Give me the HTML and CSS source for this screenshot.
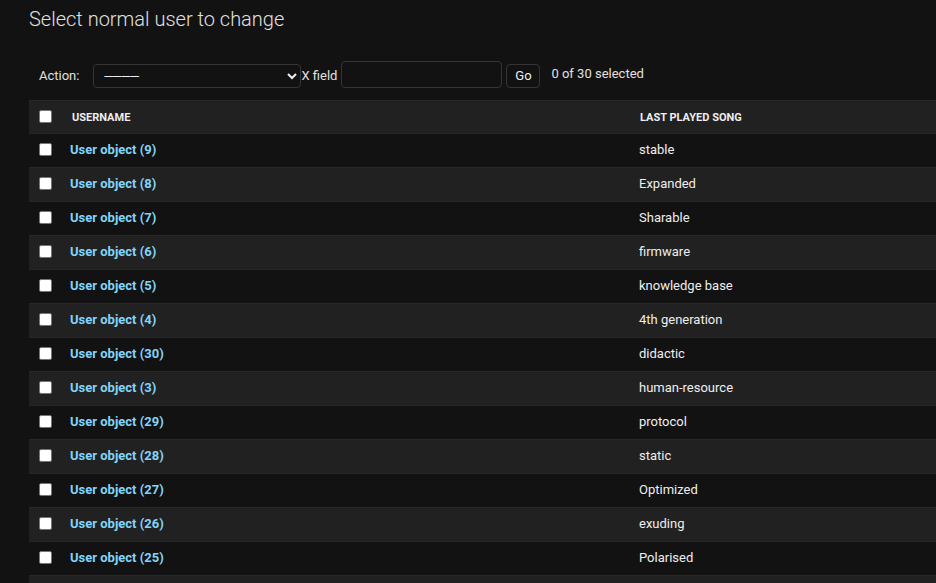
FILE: index.html
```html
<!DOCTYPE html>
<html lang="en">
<head>
<meta charset="utf-8">
<title>Select normal user to change</title>
<link rel="stylesheet" href="styles.css">
</head>
<body>
<div class="page">
  <h1 class="title">Select normal user to change</h1>
  <div class="actions">
    <label class="label-action">Action:</label>
    <select class="action-select">
      <option>————</option>
    </select>
    <label class="label-x">X field</label>
    <input class="x-input" type="text">
    <button class="go-btn" type="button">Go</button>
    <span class="counter">0 of 30 selected</span>
  </div>
  <table class="result-list">
    <colgroup>
      <col class="col-check">
      <col class="col-user">
      <col class="col-song">
    </colgroup>
    <thead>
      <tr>
        <th class="cb-cell"><input type="checkbox" class="cb"></th>
        <th><span class="th-text">Username</span></th>
        <th><span class="th-text">Last played song</span></th>
      </tr>
    </thead>
    <tbody>
      <tr><td class="cb-cell"><input type="checkbox" class="cb"></td><th class="user"><a href="#">User object (9)</a></th><td>stable</td></tr>
      <tr><td class="cb-cell"><input type="checkbox" class="cb"></td><th class="user"><a href="#">User object (8)</a></th><td>Expanded</td></tr>
      <tr><td class="cb-cell"><input type="checkbox" class="cb"></td><th class="user"><a href="#">User object (7)</a></th><td>Sharable</td></tr>
      <tr><td class="cb-cell"><input type="checkbox" class="cb"></td><th class="user"><a href="#">User object (6)</a></th><td>firmware</td></tr>
      <tr><td class="cb-cell"><input type="checkbox" class="cb"></td><th class="user"><a href="#">User object (5)</a></th><td>knowledge base</td></tr>
      <tr><td class="cb-cell"><input type="checkbox" class="cb"></td><th class="user"><a href="#">User object (4)</a></th><td>4th generation</td></tr>
      <tr><td class="cb-cell"><input type="checkbox" class="cb"></td><th class="user"><a href="#">User object (30)</a></th><td>didactic</td></tr>
      <tr><td class="cb-cell"><input type="checkbox" class="cb"></td><th class="user"><a href="#">User object (3)</a></th><td>human-resource</td></tr>
      <tr><td class="cb-cell"><input type="checkbox" class="cb"></td><th class="user"><a href="#">User object (29)</a></th><td>protocol</td></tr>
      <tr><td class="cb-cell"><input type="checkbox" class="cb"></td><th class="user"><a href="#">User object (28)</a></th><td>static</td></tr>
      <tr><td class="cb-cell"><input type="checkbox" class="cb"></td><th class="user"><a href="#">User object (27)</a></th><td>Optimized</td></tr>
      <tr><td class="cb-cell"><input type="checkbox" class="cb"></td><th class="user"><a href="#">User object (26)</a></th><td>exuding</td></tr>
      <tr><td class="cb-cell"><input type="checkbox" class="cb"></td><th class="user"><a href="#">User object (25)</a></th><td>Polarised</td></tr>
      <tr class="tail-row"><td class="cb-cell"></td><th class="user"></th><td></td></tr>
    </tbody>
  </table>
</div>
</body>
</html>
```

FILE: styles.css
```css
html, body {
  margin: 0;
  padding: 0;
  background: #121212;
  overflow: hidden;
}

body {
  font-family: Roboto, "Liberation Sans", sans-serif;
  color: #eeeeee;
  font-size: 13px;
}

.page {
  padding: 6px 0 0 29px;
  width: 1300px;
}

.title {
  margin: 0;
  font-size: 20px;
  font-weight: 300;
  line-height: 26px;
  color: #e0e0e0;
}

.actions {
  display: flex;
  align-items: flex-end;
  padding: 0 10px;
  margin-top: 29px;
  height: 27px;
  margin-bottom: 12px;
  color: #e0e0e0;
}

.label-action,
.label-x {
  line-height: 24px;
  font-size: 13px;
}

.label-action {
  margin-right: 14px;
}

.action-select {
  color-scheme: dark;
  width: 208px;
  height: 24px;
  margin: 0;
  background: #121212;
  color: #eeeeee;
  border: 1px solid #353535;
  border-radius: 4px;
  font-family: Roboto, "Liberation Sans", sans-serif;
  font-size: 13px;
  letter-spacing: -1.5px;
  padding: 0 5px;
}

.x-input {
  width: 161px;
  height: 27px;
  box-sizing: border-box;
  margin: 0 0 0 4px;
  background: #121212;
  border: 1px solid #353535;
  border-radius: 4px;
  color: #eeeeee;
  padding: 5px 6px;
}

.go-btn {
  width: 34px;
  height: 24px;
  margin: 0 0 0 4px;
  background: #121212;
  border: 1px solid #353535;
  border-radius: 4px;
  color: #eeeeee;
  font-family: Roboto, "Liberation Sans", sans-serif;
  font-size: 13px;
  padding: 0 0 1px;
}

.counter {
  margin-left: 11px;
  line-height: 24px;
  margin-bottom: 2px;
}

.result-list {
  border-collapse: collapse;
  table-layout: fixed;
  width: 1200px;
}

.col-check { width: 33px; }
.col-user { width: 568px; }

.result-list th,
.result-list td {
  text-align: left;
  vertical-align: middle;
  padding: 0 8px 1px;
  height: 32px;
  border-bottom: 1px solid #272727;
  font-size: 13px;
  line-height: 16px;
}

.result-list tbody td {
  padding-left: 9px;
  color: #eeeeee;
}

.result-list thead th {
  background: #212121;
  border-top: 1px solid #272727;
  height: 31px;
  padding-top: 1px;
  padding-bottom: 0;
  color: #eeeeee;
  font-size: 11px;
  font-weight: 700;
  text-transform: uppercase;
}

.th-text {
  display: block;
  padding: 0 2px;
}

.result-list .cb-cell,
.result-list tbody td.cb-cell,
.result-list thead th.cb-cell {
  padding: 0 0 0 6px;
}

.cb {
  appearance: none;
  -webkit-appearance: none;
  box-sizing: border-box;
  width: 13px;
  height: 13px;
  margin: 2px 3px 4px 4px;
  display: block;
  background: #ffffff;
  border: 1px solid #767676;
  border-radius: 2px;
}

.result-list tbody tr:nth-child(even) {
  background: #212121;
}

.user {
  font-weight: 700;
}

.user a {
  color: #81d4fa;
  text-decoration: none;
}
```
